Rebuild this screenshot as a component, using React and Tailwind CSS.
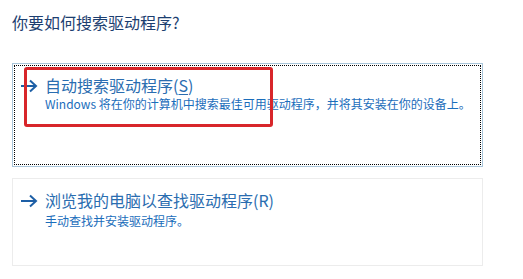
import React from 'react';

const font = { fontFamily: '"Noto Sans CJK SC", "Noto Sans", sans-serif' };

function Arrow() {
  return (
    <svg width="18" height="14" viewBox="0 0 18 14" className="shrink-0">
      <path d="M1 7h15M10 1.5L16 7l-6 5.5" fill="none" stroke="#1d5fa6" strokeWidth="2" strokeLinejoin="miter" />
    </svg>
  );
}

function Option({ title, hotkey, desc, focused }) {
  const body = (
    <div className="flex items-start pl-[5px]">
      <div className="h-[20px] flex items-center mt-[1px]">
        <Arrow />
      </div>
      <div className="pl-[7px]">
        <div className="text-[16px] leading-[20px] text-[#2a6db0]">
          {title}(<span className={focused ? 'underline underline-offset-2' : ''}>{hotkey}</span>)
        </div>
        <div className={`text-[12px] leading-[16px] text-[#1a6dbb] ${focused ? 'mt-[1px]' : 'mt-[3px]'}`}>{desc}</div>
      </div>
    </div>
  );
  if (focused) {
    return (
      <div className="border border-[#a9c6da] h-[104px]">
        <div className="m-px h-[100px] border border-dotted border-black pt-[9px]">{body}</div>
      </div>
    );
  }
  return <div className="border border-[#ececec] h-[88px] pt-[11px] pl-[2px]">{body}</div>;
}

export default function App() {
  return (
    <div className="w-[523px] h-[279px] bg-white relative overflow-hidden" style={font}>
      <div className="pl-[12px] pr-[40px]">
        <div className="pt-[11px] text-[16px] leading-[22px] text-[#1c3e70]">你要如何搜索驱动程序?</div>
        <div className="mt-[30px] flex flex-col gap-[11px]">
          <Option
            focused
            title="自动搜索驱动程序"
            hotkey="S"
            desc="Windows 将在你的计算机中搜索最佳可用驱动程序，并将其安装在你的设备上。"
          />
          <Option title="浏览我的电脑以查找驱动程序" hotkey="R" desc="手动查找并安装驱动程序。" />
        </div>
      </div>
      {/* red annotation box */}
      <div className="absolute left-[24px] top-[67px] w-[249px] h-[60px] border-[3px] border-[#d8262a] rounded-[3px]" />
    </div>
  );
}
